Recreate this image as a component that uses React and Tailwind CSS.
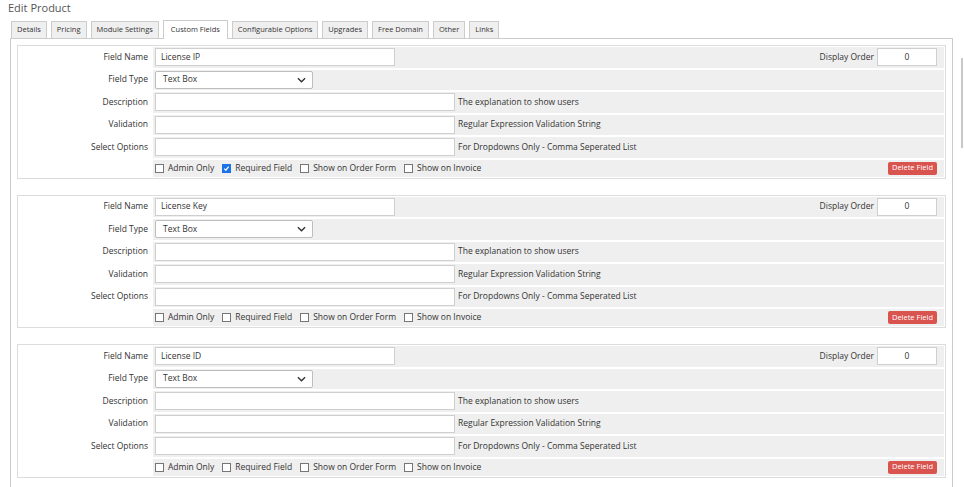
import React from "react";

const tabs = ["Details","Pricing","Module Settings","Custom Fields","Configurable Options","Upgrades","Free Domain","Other","Links"];

function Cb({checked, label}) {
  return (
    <span className="flex items-center gap-[4px] mr-[8px]">
      <span className={"w-[9px] h-[9px] border flex items-center justify-center " + (checked ? "bg-[#1a73e8] border-[#1a73e8]" : "bg-white border-[#767676]")}>
        {checked && <svg width="7" height="7" viewBox="0 0 8 8"><path d="M1.5 4.2 L3.2 6 L6.5 1.8" stroke="white" strokeWidth="1.4" fill="none"/></svg>}
      </span>
      <span>{label}</span>
    </span>
  );
}

function Row({label, children, right}) {
  return (
    <div className="flex h-[22.5px] border-b-2 border-white">
      <div className="w-[134px] shrink-0 text-right pr-[5px] flex items-center justify-end bg-white">{label}</div>
      <div className="flex-1 bg-[#efefef] flex items-center pl-[2px] pr-[7px]">{children}{right}</div>
    </div>
  );
}

function Field({name, required}) {
  return (
    <div className="border border-[#dcdcdc] ml-[6px] mr-[6px] bg-white p-[1px]">
      <Row label="Field Name" right={<div className="ml-auto flex items-center gap-[3px]"><span>Display Order</span><div className="w-[60px] h-[18px] bg-white border border-[#cfcfcf] flex items-center justify-center">0</div></div>}>
        <div className="w-[240px] h-[18px] bg-white border border-[#cfcfcf] flex items-center pl-[5px]">{name}</div>
      </Row>
      <Row label="Field Type">
        <div className="w-[158px] h-[18px] bg-white border border-[#bdbdbd] rounded-[2px] flex items-center pl-[7px] pr-[6px] justify-between">
          <span>Text Box</span>
          <svg width="9" height="6" viewBox="0 0 10 6"><path d="M1 1 L5 5 L9 1" stroke="#333" strokeWidth="1.5" fill="none"/></svg>
        </div>
      </Row>
      {[["Description","The explanation to show users"],["Validation","Regular Expression Validation String"],["Select Options","For Dropdowns Only - Comma Seperated List"]].map(([l,h])=>(
        <Row key={l} label={l}>
          <div className="w-[300px] h-[18px] bg-white border border-[#cfcfcf] shrink-0"></div>
          <span className="ml-[3px]">{h}</span>
        </Row>
      ))}
      <div className="flex h-[17px]">
        <div className="w-[134px] shrink-0 bg-white"></div>
        <div className="flex-1 bg-[#efefef] flex items-center pl-[2px] pr-[7px]">
          <Cb label="Admin Only"/><Cb checked={required} label="Required Field"/><Cb label="Show on Order Form"/><Cb label="Show on Invoice"/>
          <div className="ml-auto bg-[#d9534f] text-white text-[7.5px] h-[13px] px-[4px] flex items-center rounded-[2px]">Delete Field</div>
        </div>
      </div>
    </div>
  );
}

export default function App() {
  return (
    <div className="w-[964px] h-[487px] bg-white overflow-hidden text-[8.5px] text-[#333]" style={{fontFamily:'"Open Sans", sans-serif'}}>
      <div className="flex">
        <div className="flex-1">
          <div className="text-[11px] text-[#555] pl-[8px] h-[20px] leading-[15px]">Edit Product</div>
          <div className="flex pl-[11px] gap-[4px] h-[18px] items-end">
            {tabs.map(t => (
              <div key={t} className={"text-[7.5px] border border-[#ccc] border-b-0 flex items-center " + (t==="Custom Fields" ? "bg-white h-[19px] relative top-[1px] px-[7px]" : "bg-[#efefef] h-[17px] px-[5px]")}>{t}</div>
            ))}
          </div>
          <div className="border border-[#ccc] ml-[10px] mr-[8px] pt-[6px] flex flex-col gap-[16px] pb-[10px]">
            <Field name="License IP" required />
            <Field name="License Key" />
            <Field name="License ID" />
          </div>
        </div>
        <div className="w-[2px] bg-[#c8c8c8] mt-[58px] h-[90px] mr-[1px]"></div>
      </div>
    </div>
  );
}
